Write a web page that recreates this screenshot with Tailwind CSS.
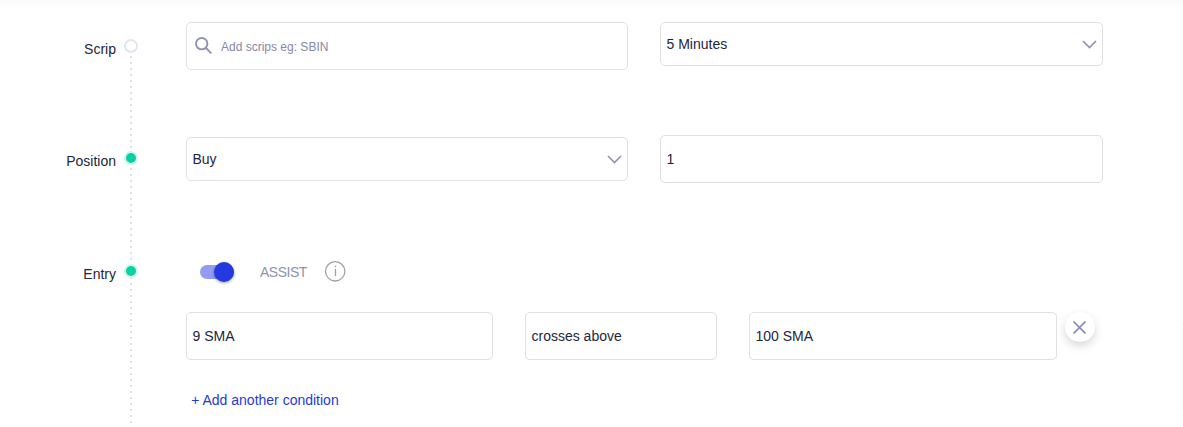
<!DOCTYPE html>
<html lang="en">
<head>
  <meta charset="UTF-8" />
  <meta name="viewport" content="width=device-width, initial-scale=1.0" />
  <title>Create Strategy</title>
  <script src="https://cdn.jsdelivr.net/npm/@tailwindcss/browser@4"></script>
</head>
<body class="bg-white h-[427px] overflow-hidden font-['Liberation_Sans',Arial,sans-serif] text-sm text-[#22263c]">

  <!-- Header shadow -->
  <div class="h-2 bg-linear-to-b from-[#f9f9f9] to-white"></div>

  <main>
    <!-- Scrip -->
    <section class="flex h-28">
      <div class="w-[116px] pt-[31px] text-right leading-5">Scrip</div>
      <div class="w-[30px] flex flex-col items-center pt-[31px]">
        <span class="w-3.5 h-3.5 shrink-0 rounded-full border-2 border-[#dfe6f2]"></span>
        <span class="w-0.5 flex-1 mt-[3px] -mb-[31px] bg-[repeating-linear-gradient(to_bottom,#e0e0e0_0_2px,transparent_2px_6px)]"></span>
      </div>
      <div class="ml-10 pt-3.5 flex items-start gap-8">
        <div class="w-[442px] h-12 flex items-center border border-[#e0e0e0] rounded-[5px] pl-2">
          <svg class="w-[17px] h-[17px] -mt-0.5" viewBox="0 0 17 17" fill="none" stroke="#8f92b0" stroke-width="1.9" stroke-linecap="round">
            <circle cx="6.7" cy="6.7" r="5.7" />
            <path d="M11 11L15.8 15.8" />
          </svg>
          <span class="ml-[9px] mt-0.5 text-xs text-[#8488a8]">Add scrips eg: SBIN</span>
        </div>
        <div class="w-[443px] h-11 flex items-center justify-between border border-[#e0e0e0] rounded-[5px] pl-[5.5px] pr-[5px]">
          <span>5 Minutes</span>
          <svg class="w-[15px] h-[9px]" viewBox="0 0 15 9" fill="none" stroke="#8f92b0" stroke-width="1.6">
            <path d="M1 1l6.5 6.5L14 1" />
          </svg>
        </div>
      </div>
    </section>

    <!-- Position -->
    <section class="flex h-[113px]">
      <div class="w-[116px] pt-[31px] text-right leading-5">Position</div>
      <div class="w-[30px] flex flex-col items-center pt-[31px]">
        <span class="relative w-3.5 h-3.5 shrink-0 rounded-full border-2 border-[#d5f5ec] bg-[#08d1a1]"></span>
        <span class="w-0.5 flex-1 mt-[3px] -mb-[31px] bg-[repeating-linear-gradient(to_bottom,#e0e0e0_0_2px,transparent_2px_6px)]"></span>
      </div>
      <div class="ml-10 pt-[15px] h-[63px] flex items-center gap-8">
        <div class="w-[442px] h-11 flex items-center justify-between border border-[#e0e0e0] rounded-[5px] pl-[5.5px] pr-[5px]">
          <span>Buy</span>
          <svg class="w-[15px] h-[9px]" viewBox="0 0 15 9" fill="none" stroke="#8f92b0" stroke-width="1.6">
            <path d="M1 1l6.5 6.5L14 1" />
          </svg>
        </div>
        <div class="w-[443px] h-12 flex items-center border border-[#e0e0e0] rounded-[5px] pl-[5.5px]">1</div>
      </div>
    </section>

    <!-- Entry -->
    <section class="flex h-[190px]">
      <div class="w-[116px] pt-[31px] text-right leading-5">Entry</div>
      <div class="w-[30px] flex flex-col items-center pt-[31px]">
        <span class="relative w-3.5 h-3.5 shrink-0 rounded-full border-2 border-[#d5f5ec] bg-[#08d1a1]"></span>
        <span class="w-0.5 flex-1 -mt-px bg-[repeating-linear-gradient(to_bottom,#e0e0e0_0_2px,transparent_2px_6px)]"></span>
      </div>
      <div class="ml-10 pt-7">
        <div class="h-[22px] flex items-center">
          <span class="ml-3.5 w-[34px] h-3.5 flex items-center justify-end rounded-full bg-[#929df0]">
            <span class="w-5 h-5 shrink-0 rounded-full bg-[#243ae0] shadow-[0_1px_3px_rgba(0,0,0,0.4)]"></span>
          </span>
          <span class="ml-[26px] w-[46px] tracking-[-0.5px] text-[#8f92ac]">ASSIST</span>
          <svg class="ml-[18px] -mt-0.5 w-[22px] h-[22px]" viewBox="0 0 22 22" fill="none" stroke="#a0a0a0" stroke-width="1.3">
            <circle cx="11.2" cy="11.3" r="9.7" />
            <path d="M11.5 9v7M11.5 5.6v1.6" />
          </svg>
        </div>
        <div class="mt-[29px] flex items-start">
          <div class="w-[307px] h-12 flex items-center border border-[#e0e0e0] rounded-[5px] pl-[5.5px]">9 SMA</div>
          <div class="ml-8 w-48 h-12 flex items-center border border-[#e0e0e0] rounded-[5px] pl-[5.5px]">crosses above</div>
          <div class="ml-8 w-[308px] h-12 flex items-center border border-[#e0e0e0] rounded-[5px] pl-[5.5px]">100 SMA</div>
          <button class="ml-2 w-[30px] h-[30px] flex items-center justify-center rounded-full bg-white pr-px shadow-[0_4px_10px_rgba(0,0,0,0.16)]">
            <svg class="w-[13px] h-[13px]" viewBox="0 0 13 13" fill="none" stroke="#8286ab" stroke-width="1.7" stroke-linecap="round">
              <path d="M1 1l11 11M12 1L1 12" />
            </svg>
          </button>
        </div>
        <a class="block mt-[30px] ml-[5.2px] leading-5 text-[#243ad8]" href="#">+ Add another condition</a>
      </div>
      <div class="ml-auto mt-[89px] w-px h-[88px] bg-[#fafafa]"></div>
    </section>
  </main>

</body>
</html>
